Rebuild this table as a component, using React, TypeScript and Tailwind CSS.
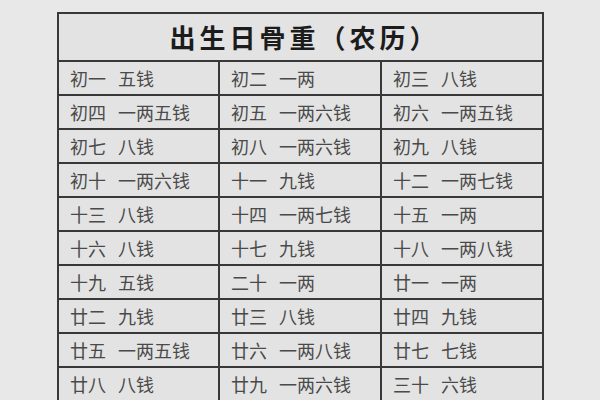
import React from "react";

const rows: [string, string][][] = [
  [["初一", "五钱"], ["初二", "一两"], ["初三", "八钱"]],
  [["初四", "一两五钱"], ["初五", "一两六钱"], ["初六", "一两五钱"]],
  [["初七", "八钱"], ["初八", "一两六钱"], ["初九", "八钱"]],
  [["初十", "一两六钱"], ["十一", "九钱"], ["十二", "一两七钱"]],
  [["十三", "八钱"], ["十四", "一两七钱"], ["十五", "一两"]],
  [["十六", "八钱"], ["十七", "九钱"], ["十八", "一两八钱"]],
  [["十九", "五钱"], ["二十", "一两"], ["廿一", "一两"]],
  [["廿二", "九钱"], ["廿三", "八钱"], ["廿四", "九钱"]],
  [["廿五", "一两五钱"], ["廿六", "一两八钱"], ["廿七", "七钱"]],
  [["廿八", "八钱"], ["廿九", "一两六钱"], ["三十", "六钱"]],
];

const App: React.FC = () => {
  return (
    <div
      className="w-[600px] h-[400px] overflow-hidden bg-[#e8e8e8] pt-[12px] pl-[57px]"
      style={{ fontFamily: '"Noto Sans CJK SC", "Noto Sans", sans-serif' }}
    >
      <div className="w-[487px] border-[2.5px] border-[#383838] bg-[#e3e3e3]">
        {/* Title */}
        <div className="h-[48px] flex items-center justify-center border-b-[2.5px] border-[#383838]">
          <span className="text-[26px] font-bold tracking-[4px] text-[#1c1c1c] leading-none pl-[8px]">
            出生日骨重（农历）
          </span>
        </div>

        {/* Rows */}
        {rows.map((row, i) => (
          <div
            key={i}
            className="grid grid-cols-[161px_162px_1fr] h-[34px] border-b-[2.5px] border-[#383838]"
          >
            {row.map(([day, weight], j) => (
              <div
                key={j}
                className={
                  "flex items-center pl-[11px] text-[18px] text-[#4a4a4a] leading-none " +
                  (j < 2 ? "border-r-[2.5px] border-[#383838]" : "")
                }
              >
                <span>{day}</span>
                <span className="ml-[12px]">{weight}</span>
              </div>
            ))}
          </div>
        ))}
      </div>
    </div>
  );
};

export default App;
